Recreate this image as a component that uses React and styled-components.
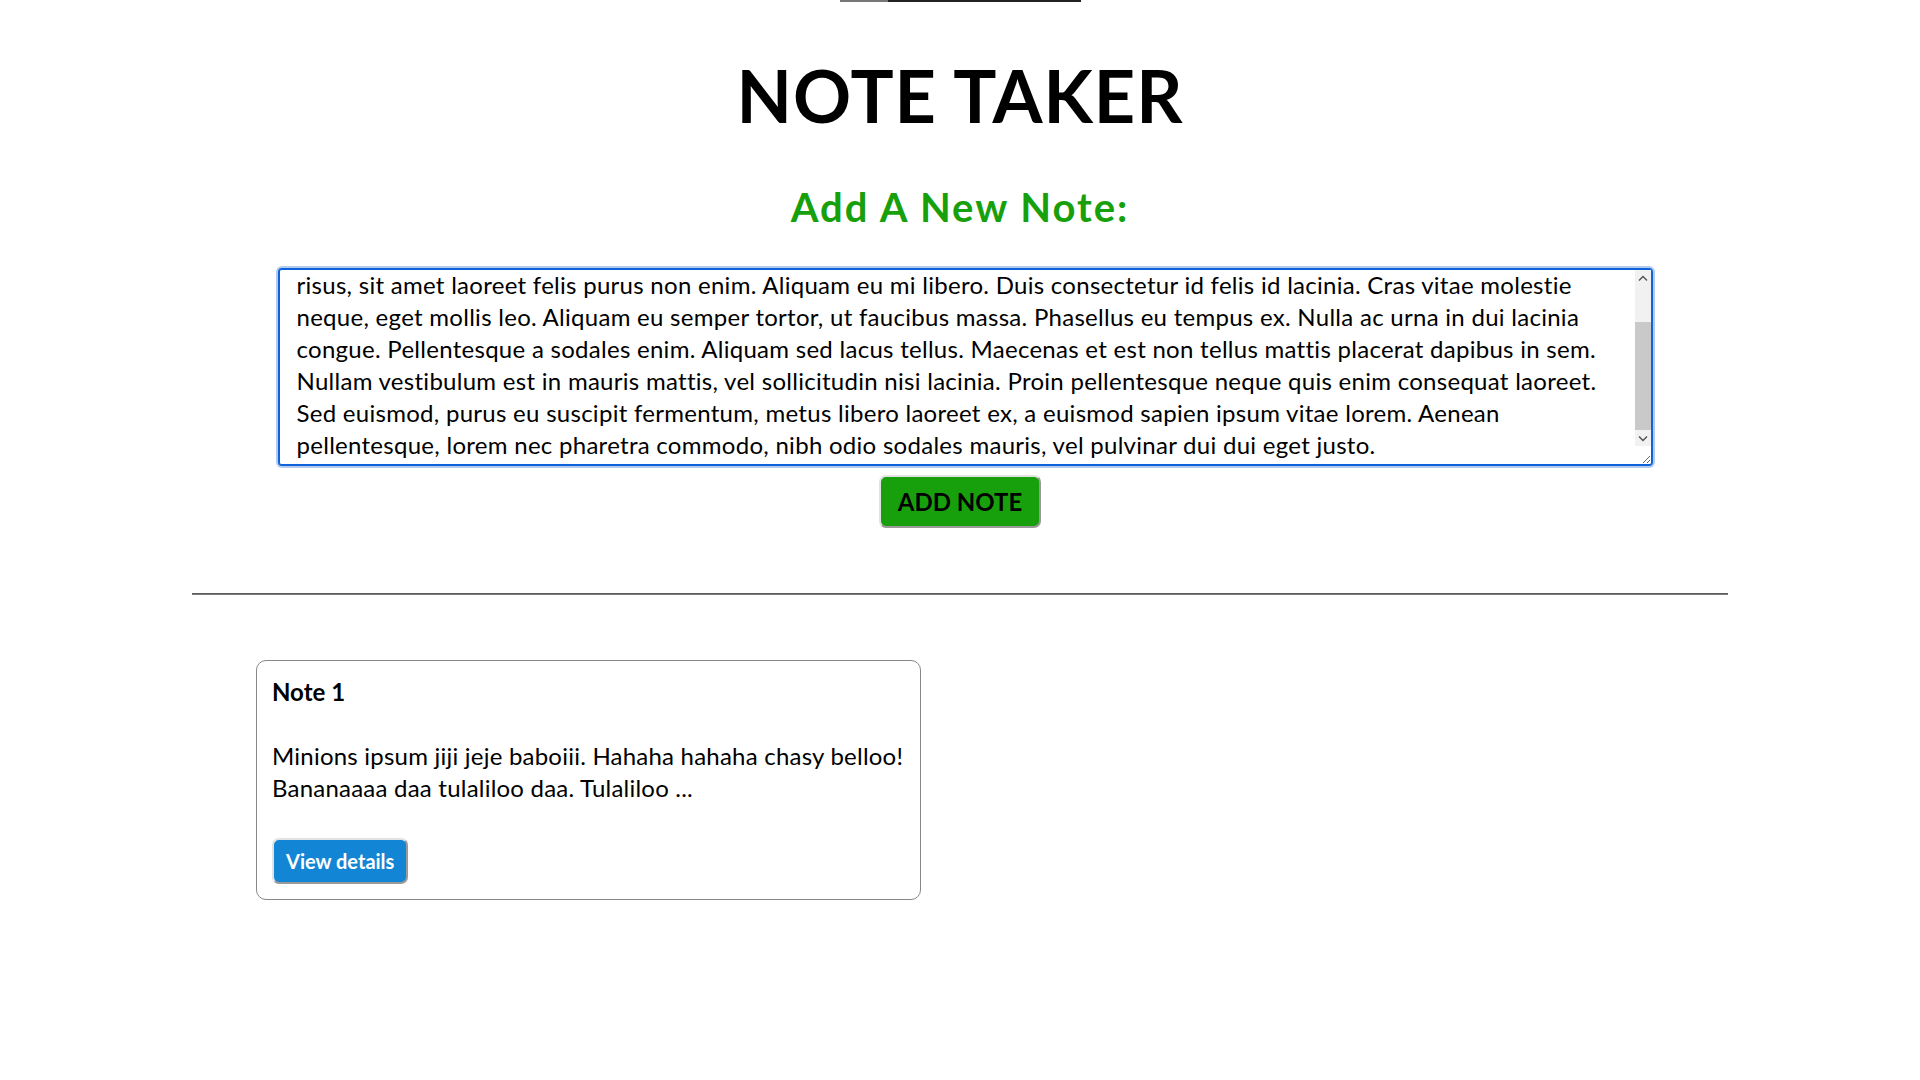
import React, { useLayoutEffect, useRef, useState } from 'react';
import styled, { createGlobalStyle } from 'styled-components';

const GlobalStyle = createGlobalStyle`
  html, body {
    margin: 0;
    padding: 0;
    background: #fff;
  }
  body {
    font-family: Lato, "Noto Sans", sans-serif;
    color: #000;
  }
`;

const Page = styled.div`
  display: flex;
  flex-direction: column;
  align-items: center;
  min-height: 1080px;
`;

const TopRule = styled.div`
  width: 241px;
  height: 2px;
  background: linear-gradient(to right, #777 0, #777 48px, #222 48px);
`;

const Title = styled.h1`
  margin: 57px 0 0;
  font-size: 72px;
  line-height: 72px;
  font-weight: 700;
  letter-spacing: 1px;
`;

const Subtitle = styled.h2`
  margin: 56px 0 0;
  font-size: 40px;
  line-height: 40px;
  font-weight: 700;
  letter-spacing: 2px;
  color: #17a00b;
`;

const NoteField = styled.div`
  position: relative;
  margin: 41px 0 0 10px;
  width: 1375px;
  height: 198px;
`;

const NoteInput = styled.textarea`
  display: block;
  box-sizing: border-box;
  width: 100%;
  height: 100%;
  margin: 0;
  padding: 0 32px 3px 17px;
  font-family: Lato, "Noto Sans", sans-serif;
  font-size: 24px;
  line-height: 32px;
  letter-spacing: 0.28px;
  color: #000;
  border: 2px solid #0f62d9;
  border-radius: 4px;
  box-shadow: 0 0 0 2px #b3cbef;
  outline: none;
  white-space: pre-wrap;
`;

const ScrollBar = styled.div`
  position: absolute;
  top: 2px;
  right: 2px;
  width: 16px;
  bottom: 20px;
  display: flex;
  flex-direction: column;
  background: #f1f1f1;
  pointer-events: none;
`;

const ScrollArrow = styled.div`
  height: 16px;
  display: flex;
  align-items: center;
  justify-content: center;
  flex: none;
`;

const ScrollTrack = styled.div`
  position: relative;
  flex: 1;
`;

const ScrollThumb = styled.div`
  position: absolute;
  left: 0;
  right: 0;
  background: #c9c9c9;
`;

const Chevron = ({ up }) => (
  <svg width="10" height="7" viewBox="0 0 10 7">
    <path
      d={up ? 'M1 5.5l4-4 4 4' : 'M1 1.5l4 4 4-4'}
      fill="none"
      stroke="#505050"
      strokeWidth="1.4"
    />
  </svg>
);

const Button = styled.button`
  font-family: Lato, "Noto Sans", sans-serif;
  font-weight: 700;
  border-width: 2px;
  border-style: solid;
  border-color: #e2e2e2 #9a9a9a #9a9a9a #e2e2e2;
  border-radius: 7px;
  cursor: pointer;
  background: ${(p) => p.bg};
  color: ${(p) => p.fg};
  font-size: ${(p) => p.size}px;
`;

const AddButton = styled(Button)`
  margin-top: 9px;
  height: 53px;
  padding: 0 17px;
`;

const Divider = styled.hr`
  width: 80%;
  margin: 65px 0 0;
  border: none;
  border-top: 1px solid #5f5f5f;
  border-bottom: 1px solid #7a7a7a;
`;

const NotesGrid = styled.div`
  box-sizing: border-box;
  width: 80%;
  margin-top: 65px;
  padding: 0 64px;
  display: grid;
  grid-template-columns: repeat(auto-fill, 665px);
  column-gap: 78px;
`;

const Card = styled.div`
  box-sizing: border-box;
  height: 240px;
  padding: 15px 15px 15px;
  border: 1px solid #888;
  border-radius: 10px;
  display: flex;
  flex-direction: column;
  align-items: flex-start;
`;

const CardTitle = styled.h3`
  margin: 0;
  font-size: 24px;
  line-height: 32.7px;
  font-weight: 700;
`;

const CardBody = styled.p`
  margin: 31px 0 0;
  font-size: 24px;
  line-height: 32px;
  letter-spacing: 0.22px;
`;

const DetailsButton = styled(Button)`
  margin-top: auto;
  height: 46px;
  padding: 0 12px;
`;

const DRAFT = [
  'Lorem ipsum dolor sit amet, consectetur adipiscing elit. Integer nec odio. Praesent libero. Sed cursus ante dapibus diam.',
  'Nulla quis sem at nibh elementum imperdiet. Duis sagittis ipsum. Praesent mauris. Fusce nec tellus sed augue quis ultrices',
  'risus, sit amet laoreet felis purus non enim. Aliquam eu mi libero. Duis consectetur id felis id lacinia. Cras vitae molestie',
  'neque, eget mollis leo. Aliquam eu semper tortor, ut faucibus massa. Phasellus eu tempus ex. Nulla ac urna in dui lacinia',
  'congue. Pellentesque a sodales enim. Aliquam sed lacus tellus. Maecenas et est non tellus mattis placerat dapibus in sem.',
  'Nullam vestibulum est in mauris mattis, vel sollicitudin nisi lacinia. Proin pellentesque neque quis enim consequat laoreet.',
  'Sed euismod, purus eu suscipit fermentum, metus libero laoreet ex, a euismod sapien ipsum vitae lorem. Aenean',
  'pellentesque, lorem nec pharetra commodo, nibh odio sodales mauris, vel pulvinar dui dui eget justo. ',
].join('\n');

const notes = [
  {
    id: 1,
    title: 'Note 1',
    body: 'Minions ipsum jiji jeje baboiii. Hahaha hahaha chasy belloo! Bananaaaa daa tulaliloo daa. Tulaliloo ...',
  },
];

const App = () => {
  const inputRef = useRef(null);
  const [bar, setBar] = useState({ top: 0, size: 1 });

  const measure = () => {
    const el = inputRef.current;
    if (!el) return;
    setBar({
      top: el.scrollTop / el.scrollHeight,
      size: el.clientHeight / el.scrollHeight,
    });
  };

  useLayoutEffect(() => {
    const el = inputRef.current;
    if (el) el.scrollTop = el.scrollHeight;
    measure();
  }, []);

  return (
    <Page>
      <GlobalStyle />
      <TopRule />
      <Title>NOTE TAKER</Title>
      <Subtitle>Add A New Note:</Subtitle>
      <NoteField>
        <NoteInput
          ref={inputRef}
          defaultValue={DRAFT}
          onScroll={measure}
          spellCheck
        />
        {bar.size < 1 && (
          <ScrollBar>
            <ScrollArrow>
              <Chevron up />
            </ScrollArrow>
            <ScrollTrack>
              <ScrollThumb
                style={{
                  top: `${bar.top * 100}%`,
                  height: `${bar.size * 100}%`,
                }}
              />
            </ScrollTrack>
            <ScrollArrow>
              <Chevron />
            </ScrollArrow>
          </ScrollBar>
        )}
      </NoteField>
      <AddButton bg="#17a00b" fg="#000" size={24}>
        ADD NOTE
      </AddButton>
      <Divider />
      <NotesGrid>
        {notes.map((n) => (
          <Card key={n.id}>
            <CardTitle>{n.title}</CardTitle>
            <CardBody>{n.body}</CardBody>
            <DetailsButton bg="#1286d5" fg="#fff" size={20}>
              View details
            </DetailsButton>
          </Card>
        ))}
      </NotesGrid>
    </Page>
  );
};

export default App;
